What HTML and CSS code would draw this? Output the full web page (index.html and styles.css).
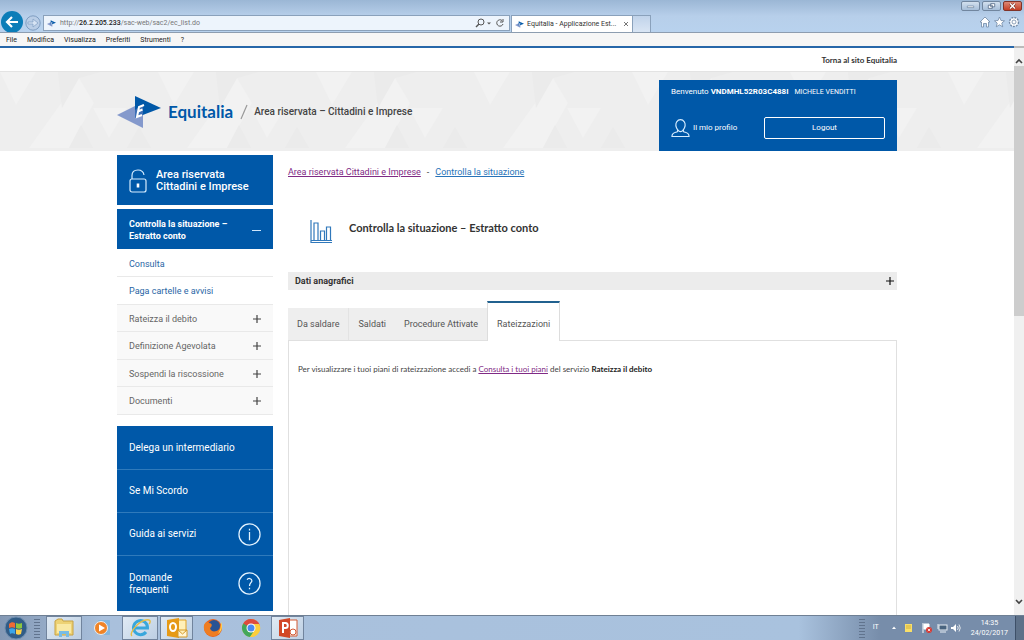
FILE: index.html
```html
<!DOCTYPE html>
<html lang="it">
<head>
<meta charset="utf-8">
<meta name="viewport" content="width=device-width, initial-scale=1">
<title>Equitalia - Applicazione Estratto conto</title>
<link rel="stylesheet" href="styles.css">
</head>
<body>
<svg class="defs" aria-hidden="true">
  <symbol id="mark" viewBox="0 0 44 34">
    <path d="M0 20 26 7V33Z" fill="#8499cc"/>
    <path d="M18 1 44 13 18 23Z" fill="#0058a8"/>
    <path d="M18 15v8l8-3V9Z" fill="#3c6fb6"/>
    <path d="M27 10l-5 2-2 10 5-2M21 16.500l4.500-2" fill="none" stroke="#fff" stroke-width="2"/>
  </symbol>
  <symbol id="plus" viewBox="0 0 8 8"><path d="M4 0v8M0 4h8" stroke="currentColor" stroke-width="1.200" fill="none"/></symbol>
</svg>

<header class="chrome">
  <div class="window-buttons">
    <button type="button" class="win" aria-label="Riduci"><svg viewBox="0 0 18 10"><path d="M5 5h8v2H5z" fill="#fff" stroke="#566f8e" stroke-width=".7"/></svg></button>
    <button type="button" class="win" aria-label="Ripristina"><svg viewBox="0 0 18 10"><path d="M8 2h5v4H8zM5 4h5v4H5z" fill="#fff" stroke="#465d7c" stroke-width=".9"/></svg></button>
    <button type="button" class="win win-close" aria-label="Chiudi"><svg viewBox="0 0 18 10"><path d="M6 2l6 6M12 2L6 8" stroke="#743025" stroke-width="3.200"/><path d="M6 2l6 6M12 2L6 8" stroke="#fff" stroke-width="1.800"/></svg></button>
  </div>
  <div class="nav-row">
    <button type="button" class="back" aria-label="Indietro"><svg viewBox="0 0 24 22"><circle cx="12" cy="12" r="11" fill="#0c7db8"/><path d="M18 12H7M12 7l-5 5 5 5" fill="none" stroke="#fff" stroke-width="2.200"/></svg></button>
    <button type="button" class="forward" aria-label="Avanti"><svg viewBox="0 0 18 18"><circle cx="9" cy="9" r="7.200" fill="#b9cde6" stroke="#7f9dc1"/><path d="M4 8h5V5l5 4-5 4v-3H4z" fill="#d7e4f4" stroke="#7f9dc1" stroke-width=".7"/></svg></button>
    <div class="address">
      <svg class="favicon"><use href="#mark"/></svg>
      <span class="url">http://<b>26.2.205.233</b>/sac-web/sac2/ec_list.do</span>
      <svg class="addr-icons" viewBox="0 0 30 12"><circle cx="6" cy="5" r="3" fill="none" stroke="#555" /><path d="M4 7L1 10" stroke="#555" stroke-width="1.400"/><path d="M12 5.500h4l-2 2z" fill="#555"/><path d="M27 3.500A3.200 3.200 0 1 0 28 7M28 2v3h-3" fill="none" stroke="#555"/></svg>
    </div>
    <div class="tab">
      <svg class="favicon"><use href="#mark"/></svg>
      <span class="tab-title">Equitalia - Applicazione Est...</span>
      <button type="button" class="tab-close" aria-label="Chiudi scheda"><svg viewBox="0 0 6 6"><path d="M1 1l4 4M5 1L1 5" stroke="#777"/></svg></button>
    </div>
    <button type="button" class="new-tab" aria-label="Nuova scheda"></button>
    <svg class="tools" viewBox="0 0 42 12" fill="#fff" stroke="#7189a6" stroke-width=".8"><path d="M1 6l5-5 5 5H9.500v5h-2V7.500h-3V11h-2V6z"/><path d="M20.500 1l1.500 3.500 3.500.300-2.700 2.300.900 3.700-3.200-2-3.200 2 .9-3.700-2.700-2.300 3.500-.3z"/><circle cx="35" cy="6" r="4.500" stroke-dasharray="2 1" stroke-width="1.400"/><circle cx="35" cy="6" r="2"/></svg>
  </div>
</header>
<nav class="menubar" aria-label="Menu del browser">
  <button type="button">File</button><button type="button">Modifica</button><button type="button">Visualizza</button><button type="button">Preferiti</button><button type="button">Strumenti</button><button type="button">?</button>
</nav>

<div class="viewport">
  <div class="page">
    <div class="topbar"><div class="wrap"><a href="#">Torna al sito Equitalia</a></div></div>
    <div class="banner">
      <svg class="pattern" aria-hidden="true">
        <defs><pattern id="tri" width="158" height="80" patternUnits="userSpaceOnUse">
          <path d="M0 0h158v80H0z" fill="#eeeeee"/>
          <path d="M79 6 94 31 69 76H29ZM0 0H36L16 33ZM93 36h34L109 66Z" fill="#f2f2f2"/>
          <path d="M58 0H100L79 6 62 36ZM69 76h24L81 53ZM127 76h24L139 55Z" fill="#ebebeb"/>
        </pattern></defs>
        <rect width="100%" height="100%" fill="url(#tri)"/>
      </svg>
      <div class="wrap banner-row">
        <div class="brand">
          <svg class="logo"><use href="#mark"/></svg>
          <span class="brand-name">Equitalia</span>
          <svg class="slash" viewBox="0 0 8 16"><path d="M7 1L1 15" stroke="#999" stroke-width="1.200"/></svg>
          <span class="brand-sub">Area riservata – Cittadini e Imprese</span>
        </div>
        <section class="user">
          <p class="welcome">Benvenuto <b>VNDMHL52R03C488I</b> <span class="fullname">MICHELE VENDITTI</span></p>
          <div class="user-actions">
            <a href="#" class="profile"><svg viewBox="0 0 20 20" fill="none" stroke="#d5ecff" stroke-width="1.200"><path d="M7 12C5 9 4.500 6 6 3.500 8 .500 12 .500 14 3.500 15.500 6 15 9 13 12c0 2 0 2 2 2.500 3 .7 4 2 4 4.500H1c0-2.500 1-3.800 4-4.500 2-.5 2-.5 2-2.500z"/><path d="M7 12c2 2.500 4 2.500 6 0"/></svg>Il mio profilo</a>
            <button type="button" class="logout">Logout</button>
          </div>
        </section>
      </div>
    </div>

    <div class="wrap columns">
      <aside class="sidebar">
        <a href="#" class="side-head"><svg viewBox="0 0 18 24" fill="none" stroke="#d5ecff" stroke-width="1.200"><rect x="1" y="10" width="16" height="13" rx="2"/><path d="M3 10V6.500C3 3 5.500 1 9 1s5.500 2 6 5"/><path d="M9 14.500v4" stroke-width="2.600" stroke="#fff"/></svg><span>Area riservata<br>Cittadini e Imprese</span></a>
        <button type="button" class="side-open"><span>Controlla la situazione –<br>Estratto conto</span><i class="minus"></i></button>
        <ul class="side-list">
          <li><a href="#">Consulta</a></li>
          <li><a href="#">Paga cartelle e avvisi</a></li>
          <li class="more"><button type="button">Rateizza il debito<svg><use href="#plus"/></svg></button></li>
          <li class="more"><button type="button">Definizione Agevolata<svg><use href="#plus"/></svg></button></li>
          <li class="more"><button type="button">Sospendi la riscossione<svg><use href="#plus"/></svg></button></li>
          <li class="more"><button type="button">Documenti<svg><use href="#plus"/></svg></button></li>
        </ul>
        <nav class="services" aria-label="Servizi">
          <a href="#">Delega un intermediario</a>
          <a href="#">Se Mi Scordo</a>
          <a href="#">Guida ai servizi<svg viewBox="0 0 24 24" fill="none" stroke="#e3f3ff" stroke-width="1.300"><circle cx="12" cy="12" r="11"/><path d="M12 9.500V18M12 6v1.800"/></svg></a>
          <a href="#" class="tall"><span>Domande<br>frequenti</span><svg viewBox="0 0 24 24" fill="none" stroke="#e3f3ff" stroke-width="1.300"><circle cx="12" cy="12" r="11"/><path d="M9.500 8c1-2 5-1.500 5 1 0 2-2.500 2.500-2.500 5.500M12 16.500V18"/></svg></a>
        </nav>
      </aside>
      <main class="main">
        <nav class="crumbs" aria-label="Percorso"><a href="#" class="visited">Area riservata Cittadini e Imprese</a><span>-</span><a href="#">Controlla la situazione</a></nav>
        <div class="title">
          <svg viewBox="0 0 22 24" fill="none" stroke="#3078bb" stroke-width="1.200"><path d="M1 0v22.500h21M1 20.500h21"/><path d="M4 20V3h4v17M10.500 20v-9h4v9M16.500 20V7h4v13"/></svg>
          <h1>Controlla la situazione – Estratto conto</h1>
        </div>
        <button type="button" class="accordion">Dati anagrafici<svg><use href="#plus"/></svg></button>
        <div class="tabs" role="tablist">
          <button type="button" role="tab">Da saldare</button><button type="button" role="tab">Saldati</button><button type="button" role="tab">Procedure Attivate</button><button type="button" role="tab" aria-selected="true" class="active">Rateizzazioni</button>
        </div>
        <section class="panel"><p>Per visualizzare i tuoi piani di rateizzazione accedi a <a href="#" class="visited">Consulta i tuoi piani</a> del servizio <b>Rateizza il debito</b></p></section>
      </main>
    </div>
  </div>
  <div class="scrollbar" aria-hidden="true">
    <svg viewBox="0 0 10 10"><path d="M2 7l3-3 3 3" fill="none" stroke="#444" stroke-width="1.600"/></svg>
    <div class="track"><div class="thumb"></div></div>
    <svg viewBox="0 0 10 10"><path d="M2 3l3 3 3-3" fill="none" stroke="#444" stroke-width="1.600"/></svg>
  </div>
</div>

<footer class="taskbar">
  <button type="button" class="start" aria-label="Start"><svg viewBox="0 0 24 24"><circle cx="12" cy="12" r="11" fill="#315c86" stroke="#6d8daf"/><path d="M5 8c2-2 4-2 6-1v5c-2-1-4-1-6 0z" fill="#ef6b35"/><path d="M12 7c2 1 4 1 6 0v5c-2 1-4 1-6 0z" fill="#8dc63f"/><path d="M5 13c2-1 4-1 6 0v5c-2-1-4-1-5 0z" fill="#3aa5e8"/><path d="M12 13c2 1 4 1 6 0l-1 5c-2 1-3 1-5 0z" fill="#fcd04a"/></svg></button>
  <i class="grip"></i>
  <button type="button" class="app running" aria-label="Esplora risorse"><svg viewBox="0 0 22 22"><path d="M2 4l3-2h4l1 2h10v14H2z" fill="#edd275" stroke="#c7a244"/><path d="M4 7h14v9H4z" fill="#f9e9a5"/><path d="M6 20v-6h10v6h-3v-3H9v3z" fill="#79bce4"/></svg></button>
  <button type="button" class="app" aria-label="Media Player"><svg viewBox="0 0 22 22"><rect x="7" y="3" width="12" height="15" rx="1" fill="#84b6df"/><circle cx="10" cy="11" r="6.500" fill="#f08427" stroke="#eee"/><path d="M8 7.500l6 3.500-6 3.500z" fill="#fff"/></svg></button>
  <button type="button" class="app running" aria-label="Internet Explorer"><svg viewBox="0 0 22 22"><path d="M17 15a7 7 0 1 1 1.500-4H6" fill="none" stroke="#38a7dc" stroke-width="3"/><path d="M3 19C-1 16 12 1 20 3c2 .5 1 3 0 4" fill="none" stroke="#e6bd46" stroke-width="1.400"/></svg></button>
  <button type="button" class="app narrow running" aria-label="Outlook"><svg viewBox="0 0 22 22"><path d="M10 3h10v16H10z" fill="#fff0b9" stroke="#e1a326"/><path d="M1 3l12-2v20L1 19z" fill="#e69a16"/><ellipse cx="7" cy="10" rx="3" ry="4" fill="none" stroke="#fff" stroke-width="2"/><path d="M12 13h9v7h-9zl4.500 4 4.500-4" fill="#fff5d5" stroke="#d49a2b"/></svg></button>
  <button type="button" class="app" aria-label="Firefox"><svg viewBox="0 0 22 22"><circle cx="11" cy="11" r="9" fill="#e8601c"/><circle cx="12" cy="9" r="6" fill="#295394"/><path d="M2 8c2-4 4-3 5-2 4 0 3 4 1 5 1 5 7 4 11 0-1 6-5 9-9 8-6 0-9-6-8-11z" fill="#ef7d22"/><path d="M19 5c2 4 1 9-3 12 2-4 3-7 3-12z" fill="#ffd34e"/></svg></button>
  <button type="button" class="app" aria-label="Chrome"><svg viewBox="0 0 22 22"><circle cx="11" cy="11" r="9" fill="#fbce3c"/><path d="M11 11H20A9 9 0 0 0 3.200 6.500L8 15z" fill="#dd4b3e"/><path d="M11 11L3.200 6.500A9 9 0 0 0 10 20l5-7z" fill="#42a75b"/><path d="M11 7h8.200A9 9 0 0 1 10 20l5-7z" fill="#fbce3c"/><circle cx="11" cy="11" r="4.500" fill="#fff"/><circle cx="11" cy="11" r="3.500" fill="#4a8af0"/></svg></button>
  <button type="button" class="app narrow running" aria-label="PowerPoint"><svg viewBox="0 0 22 22"><path d="M8 3h12v16H8z" fill="#fff" stroke="#d35a35"/><path d="M2 3l11-2v20L2 19z" fill="#d24726"/><path d="M6 16V6h2.500c3 0 3 5 0 5H6" fill="none" stroke="#fff" stroke-width="2"/><circle cx="16" cy="15" r="3" fill="#fff" stroke="#d35a35"/></svg></button>
  <div class="tray">
    <i class="grip"></i>
    <span class="lang">IT</span>
    <svg class="tray-icons" viewBox="0 0 72 14"><path d="M3 8l2-2.500L7 8z" fill="#fff"/><rect x="16" y="3" width="7" height="8" fill="#f9df68"/><path d="M17 5h5M17 7h5" stroke="#c39b2d" stroke-width=".7"/><path d="M34 2v10M35 3h5v5h-5z" fill="#fff" stroke="#fff"/><circle cx="40" cy="9" r="3" fill="#d83932"/><path d="M38.800 7.800l2.400 2.400M41.200 7.800l-2.400 2.400" stroke="#fff" stroke-width=".8"/><rect x="50" y="4" width="8" height="5" fill="#49647f" stroke="#e8eef4"/><path d="M51 11h6M49 3v5" stroke="#e8eef4"/><path d="M62 6h2l3-3v8l-3-3h-2z" fill="#fff"/><path d="M68.500 5q1.500 2 0 4M70 3.500q2.500 3.500 0 7" fill="none" stroke="#fff" stroke-width=".8"/></svg>
    <time class="clock" datetime="2017-02-24T14:35">14:35<br>24/02/2017</time>
    <i class="show-desktop"></i>
  </div>
</footer>
</body>
</html>
```

FILE: styles.css
```css
* { box-sizing: border-box; }
body { margin: 0; height: 100vh; display: flex; flex-direction: column; overflow: hidden; background: #fff; color: #444; font: 9px/12px Roboto, "Open Sans", sans-serif; }
button { margin: 0; padding: 0; border: 0; background: none; color: inherit; font: inherit; text-align: left; }
a { color: inherit; text-decoration: none; }
p, h1, ul { margin: 0; padding: 0; }
svg { display: block; flex: none; }
.defs { width: 0; height: 0; position: absolute; }

/* Browser window */
.chrome { flex: none; height: 33px; display: flex; flex-direction: column; background: linear-gradient(#9bb7d5, #b7cfea 50%, #b8d2ee); border-bottom: 1px solid #8d9db0; }
.window-buttons { display: flex; gap: 2px; justify-content: flex-end; padding: 1px 2px 0 0; height: 11px; }
.win { width: 19px; height: 10px; border: 1px solid #71869f; border-radius: 2px; background: linear-gradient(#d3e0ee, #a6bed9); }
.win svg { width: 17px; height: 8px; }
.win-close { background: linear-gradient(#dd8875, #c53e25); border-color: #803328; }
.nav-row { flex: 1; min-height: 0; display: flex; align-items: flex-end; }
.back { width: 24px; height: 22px; }
.back svg { width: 24px; height: 22px; }
.forward { width: 19px; height: 19px; }
.forward svg { width: 18px; height: 18px; }
.address { flex: 0 1 467px; height: 16px; display: flex; align-items: center; gap: 4px; padding: 0 4px 0 3px; background: #edf4fc; border: 1px solid #8aa1bb; margin-bottom: 1px; }
.favicon { width: 9px; height: 9px; }
.url { flex: 1; color: #777; font-size: 7px; }
.url b { color: #222; font-weight: 500; }
.addr-icons { width: 30px; height: 12px; }
.tab { width: 122px; height: 17px; margin-left: 1px; display: flex; align-items: center; gap: 3px; padding: 0 3px; background: #fff; border: 1px solid #8aa1bb; border-bottom: 0; color: #333; font-size: 7px; }
.tab-title { flex: 1; white-space: nowrap; }
.tab-close, .tab-close svg { width: 6px; height: 6px; }
.new-tab { width: 18px; height: 17px; border: 1px solid #8aa1bb; border-bottom: 0; border-left: 0; background: linear-gradient(#c0d3ea, #d9e5f4); }
.tools { width: 42px; height: 12px; margin: 0 3px 4px auto; }
.menubar { flex: none; height: 13px; display: flex; align-items: center; gap: 10px; padding-left: 6px; background: #f6f6f6; color: #222; font-size: 7px; }

/* Scrolling area */
.viewport { flex: 1; min-height: 0; display: flex; }
.page { flex: 1; min-width: 0; overflow: hidden; border-top: 2px solid #2767a9; }
.scrollbar { width: 10px; display: flex; flex-direction: column; justify-content: space-between; padding: 8px 0; background: #f0f0f0; border-top: 2px solid #bbb; }
.scrollbar svg { width: 10px; height: 10px; }
.track { flex: 1; }
.thumb { height: 47%; background: #cdcdcd; }
.wrap { width: 77%; max-width: 780px; margin: 0 auto; }
.topbar { height: 24px; border-bottom: 1px solid #e3e3e3; text-align: right; line-height: 23px; font: 700 8px/24px Lato, sans-serif; color: #333; }
.banner { position: relative; height: 79px; }
.pattern { position: absolute; inset: 0; width: 100%; height: 100%; }
.banner-row { position: relative; height: 100%; display: flex; justify-content: space-between; align-items: flex-end; }
.brand { height: 100%; display: flex; align-items: center; }
.logo { width: 44px; height: 34px; }
.brand-name { margin-left: 7px; color: #0058a8; font: 700 17px/20px Lato, sans-serif; }
.slash { width: 8px; height: 16px; margin: 0 6px 0 7px; }
.brand-sub { font-size: 10px; font-weight: 500; }
.user { width: 238px; height: 71px; padding: 6px 12px 12px; display: flex; flex-direction: column; justify-content: space-between; background: #0058a8; color: #fff; font-size: 8px; white-space: nowrap; }
.fullname { margin-left: 4px; font-size: 7px; }
.user-actions { display: flex; justify-content: space-between; align-items: center; }
.profile { display: flex; align-items: center; gap: 3px; }
.profile svg { width: 19px; height: 20px; }
.logout { width: 121px; height: 22px; border: 1px solid #fff; border-radius: 2px; text-align: center; }

/* Sidebar */
.columns { display: flex; align-items: flex-start; gap: 15px; padding-top: 4px; }
.sidebar { flex: 0 0 20%; }
.side-head { display: flex; align-items: center; gap: 9px; height: 50px; padding: 2px 12px 0; background: #0058a8; color: #fff; font-size: 11px; font-weight: 500; white-space: nowrap; }
.side-head svg { width: 18px; height: 24px; }
.side-open { width: 100%; height: 40px; margin-top: 4px; padding: 2px 12px 0; display: flex; align-items: center; justify-content: space-between; background: #0058a8; color: #fff; font-weight: 700; }
.minus { width: 9px; border-top: 1px solid #cfe6fb; }
.side-list { list-style: none; margin-bottom: 11px; padding-top: 1px; }
.side-list li { border-bottom: 1px solid #e9e9e9; color: #2a66a5; line-height: 28px; height: 27px; padding: 0 12px; }
.side-list li:nth-child(even) { height: 28px; }
.side-list .more { background: #f9f9f9; color: #666; }
.side-list button { width: 100%; display: flex; align-items: center; justify-content: space-between; }
.side-list svg { width: 8px; height: 8px; color: #444; }
.services { background: #0058a8; color: #fff; }
.services a { height: 43px; padding: 0 12px; display: flex; align-items: center; justify-content: space-between; font-size: 10px; }
.services a + a { border-top: 1px solid #2f7abb; }
.services svg { width: 23px; height: 23px; }
.services .tall { height: 56px; }

/* Content */
.main { flex: 1; min-width: 0; }
.crumbs { display: flex; gap: 6px; padding-top: 11px; color: #444; }
.crumbs a { color: #2873b8; text-decoration: underline; }
.crumbs .visited, .panel .visited { color: #802a85; text-decoration: underline; }
.title { display: flex; gap: 17px; padding: 42px 0 0 22px; height: 94px; }
.title svg { width: 22px; height: 24px; }
h1 { font: 700 11px/15px Lato, sans-serif; color: #333; }
.accordion { width: 100%; height: 18px; padding: 0 3px 0 7px; display: flex; align-items: center; justify-content: space-between; background: #ececec; color: #333; font-weight: 700; }
.accordion svg { width: 8px; height: 8px; color: #111; }
.tabs { display: flex; align-items: flex-end; height: 50px; padding-top: 11px; }
.tabs button { height: 32px; padding: 0 9px; background: #eee; color: #555; }
.tabs button:first-child { border-right: 1px solid #e3e3e3; }
.tabs .active { height: 40px; padding-top: 4px; margin-bottom: -1px; background: #fff; border: 1px solid #ddd; border-top: 2px solid #21618f; border-bottom: 0; z-index: 1; }
.panel { height: 400px; padding: 22px 9px; border: 1px solid #e0e0e0; font-family: Lato, sans-serif; font-size: 8px; }
.panel b { color: #222; font-weight: 700; }

/* Taskbar */
.taskbar { flex: none; height: 25px; display: flex; align-items: center; gap: 2px; padding-left: 4px; background: linear-gradient(90deg, #8398b4, #a9c0dc 10%, #a9c2de 78%, #778daa 86%); border-top: 1px solid #6f8094; }
.start, .start svg { width: 24px; height: 24px; }
.grip { width: 6px; height: 19px; margin: 0 4px; background: repeating-linear-gradient(#61748e 0 1px, transparent 1px 3px); }
.app { width: 36px; height: 24px; display: flex; align-items: center; justify-content: center; border: 1px solid transparent; }
.app.running { border-color: #71849d; background: linear-gradient(135deg, #e0eaf4, #bdcfe3); }
.app.narrow { width: 33px; }
.app svg { width: 22px; height: 22px; }
.tray { margin-left: auto; height: 100%; display: flex; align-items: center; color: #fff; font-size: 7px; line-height: 10px; }
.lang { margin: 0 10px 3px 4px; }
.tray-icons { width: 72px; height: 14px; }
.clock { margin-left: 10px; text-align: center; }
.show-desktop { width: 9px; height: 100%; margin-left: 7px; background: #5e7189; border-left: 1px solid #3e5068; }
```
